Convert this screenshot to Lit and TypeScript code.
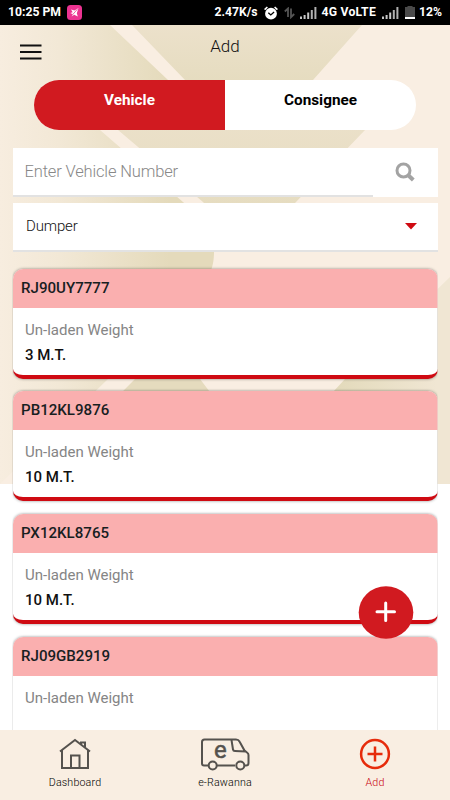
import { LitElement, html, css, svg, nothing } from "lit";
import { customElement } from "lit/decorators.js";

interface Vehicle {
  plate: string;
  weight?: string;
}

const vehicles: Vehicle[] = [
  { plate: "RJ90UY7777", weight: "3 M.T." },
  { plate: "PB12KL9876", weight: "10 M.T." },
  { plate: "PX12KL8765", weight: "10 M.T." },
  { plate: "RJ09GB2919" },
];

const signal = svg`<path d="M0 9.5h2V12H0zM3.6 8h2v4h-2zM7.2 5.500h2V12h-2z" fill="#c8c8c8"/><path d="M10.800 3h2v9h-2zM14.400 0h2v12h-2z" fill="#b0b0b0"/>`;

@customElement("status-bar")
class StatusBar extends LitElement {
  static styles = css`
    :host {
      display: flex;
      align-items: center;
      height: 25px;
      box-sizing: border-box;
      padding: 0 8px;
      background: #000;
      color: #fff;
      font: 700 12.200px/25px Roboto, "Liberation Sans", sans-serif;
      white-space: nowrap;
    }
    svg { display: block; flex: none; }
    .app { margin-left: 6px; }
    .speed { margin-left: auto; }
    .alarm { margin-left: 6.500px; }
    .data { margin-left: 6px; }
    .sig { margin-left: 5px; }
    .net { margin-left: 4.500px; letter-spacing: 0.25px; }
    .sig2 { margin-left: 6px; }
    .batt { margin-left: 6px; }
    .pct { margin-left: 4px; }
  `;
  render() {
    return html`
      <span>10:25 PM</span>
      <svg class="app" width="15" height="15" viewBox="0 0 15 15">
        <rect width="15" height="15" rx="3.500" fill="#ec3391" />
        <path d="M11.500 3 7.500 5.600 4 4.600l1.700 2.600L3.300 8l2.200 1-.9 2.400 2.600-1.700 3.600 1.700-1-3.200z" fill="#fff" />
        <path d="m4 11.500 7-8" stroke="#ec3391" stroke-width=".8" />
      </svg>
      <span class="speed">2.47K/s</span>
      <svg class="alarm" width="14" height="14" viewBox="0 0 14 14">
        <circle cx="7" cy="7.700" r="5.900" fill="#fff" />
        <path d="M.6 3.600 3.400 1M13.400 3.600 10.600 1" stroke="#fff" stroke-width="1.600" />
        <path d="m4.300 6.700 2.500 2.300 3.300-2.900" fill="none" stroke="#000" stroke-width="1.300" />
      </svg>
      <svg class="data" width="11" height="12" viewBox="0 0 11 12" fill="none" stroke="#555" stroke-width="1.800">
        <path d="M.8 4.500 4 1.500V10M7 1.500V10.200L10.200 7" />
      </svg>
      <svg class="sig" width="17" height="12" viewBox="0 0 17 12">${signal}</svg>
      <span class="net">4G VoLTE</span>
      <svg class="sig2" width="17" height="12" viewBox="0 0 17 12">${signal}</svg>
      <svg class="batt" width="10" height="13" viewBox="0 0 10 13">
        <path d="M2.500 0h5v1H10v10H0V1h2.500z" fill="#4a4a4a" />
        <path d="M0 11h10v2H0z" fill="#fff" />
      </svg>
      <span class="pct">12%</span>
    `;
  }
}

@customElement("vehicle-card")
class VehicleCard extends LitElement {
  static properties = { vehicle: { attribute: false } };
  declare vehicle: Vehicle;
  static styles = css`
    :host {
      display: block;
      flex: none;
      height: 110px;
      box-sizing: border-box;
      border-radius: 10px;
      border-bottom: 4px solid #cf0a12;
      background: #fff;
      overflow: hidden;
      box-shadow: 0 0 3px rgba(0, 0, 0, 0.45);
      font-family: Roboto, "Liberation Sans", sans-serif;
      clip-path: inset(-3px 0 -4px 0);
    }
    .plate {
      height: 39px;
      padding-left: 8.500px;
      background: #faafaf;
      color: #17201f;
      font-size: 15.100px;
      font-weight: 500;
      line-height: 39px;
    }
    .body {
      padding: 10px 12.500px;
      font-size: 15px;
      line-height: 25px;
      color: #858585;
    }
    .weight { color: #111; font-weight: 500; }
  `;
  render() {
    const { plate, weight } = this.vehicle;
    return html`
      <div class="plate">${plate}</div>
      <div class="body">
        <div>Un-laden Weight</div>
        ${weight ? html`<div class="weight">${weight}</div>` : nothing}
      </div>
    `;
  }
}

@customElement("app-root")
class AppRoot extends LitElement {
  static styles = css`
    :host {
      display: flex;
      flex-direction: column;
      position: relative;
      width: 450px;
      height: 800px;
      overflow: hidden;
      background: #fff;
      font-family: Roboto, "Liberation Sans", sans-serif;
      color: #111;
    }
    .backdrop { position: absolute; left: 0; top: 25px; }
    status-bar, header, main, footer { position: relative; flex: none; }
    header {
      display: grid;
      grid-template-columns: 60px 1fr 60px;
      height: 55px;
    }
    .menu { margin: 19px 0 0 20px; }
    .title {
      margin-top: 10px;
      text-align: center;
      font-size: 17px;
      line-height: 22px;
      font-weight: 300;
    }
    .tabs {
      display: flex;
      flex: none;
      height: 50px;
      margin: 0 34px;
      border-radius: 25px;
      overflow: hidden;
      background: #fff;
      font-size: 15.300px;
      line-height: 40px;
      font-weight: 700;
      text-align: center;
    }
    .tab { flex: 1; color: #000; }
    .tab.on { background: #d11a20; color: #fff; }
    main {
      display: flex;
      flex-direction: column;
      height: 650px;
      overflow: hidden;
    }
    .field {
      display: flex;
      flex: none;
      align-items: stretch;
      height: 49.500px;
      margin: 17.700px 12.500px 0;
      background: #fff;
      font-weight: 300;
    }
    .entry {
      width: 360px;
      box-sizing: border-box;
      padding-left: 12px;
      border-bottom: 2px solid #e2e2e2;
      font-size: 16.500px;
      letter-spacing: -0.15px;
      line-height: 48px;
      color: #888;
    }
    .search { margin: 14px 0 0 22px; }
    .select {
      justify-content: space-between;
      box-sizing: border-box;
      margin-top: 5.400px;
      padding: 0 20.500px 0 13.500px;
      border-bottom: 2px solid #e2e2e2;
      font-size: 15px;
      letter-spacing: -0.15px;
      line-height: 47px;
      color: #111;
    }
    .caret { margin-top: 20px; }
    .list {
      display: flex;
      flex-direction: column;
      gap: 12.900px;
      padding: 16.500px 12.500px 0;
    }
    .fab {
      position: absolute;
      left: 358px;
      top: 586px;
    }
    footer {
      display: grid;
      grid-template-columns: repeat(3, 1fr);
      height: 70px;
      background: #f9eee2;
      font-size: 10.700px;
      font-weight: 300;
      line-height: 14px;
      letter-spacing: 0.15px;
      color: #000;
    }
    .nav {
      display: flex;
      flex-direction: column;
      align-items: center;
      padding-top: 8px;
    }
    .nav svg { height: 32px; overflow: visible; }
    .nav span { margin-top: 6px; }
    .nav.on { color: #c8000a; }
    .e { font: 400 24px/24px Roboto, sans-serif; letter-spacing: 0; }
  `;
  render() {
    return html`
      <svg class="backdrop" width="450" height="459" viewBox="0 25 450 459">
        <defs>
          <linearGradient id="side" gradientUnits="userSpaceOnUse" x1="0" y1="0" x2="170" y2="0">
            <stop offset="0" stop-color="#f7eddf" />
            <stop offset=".35" stop-color="#f2e8d6" />
            <stop offset="1" stop-color="#e4dabb" />
          </linearGradient>
          <linearGradient id="head" x1="0" y1="0" x2="0" y2="1">
            <stop offset="0" stop-color="#ece1cb" />
            <stop offset="1" stop-color="#e3dabb" />
          </linearGradient>
          <linearGradient id="right" gradientUnits="userSpaceOnUse" x1="335" y1="0" x2="437" y2="0">
            <stop offset="0" stop-color="#e3dabb" />
            <stop offset="1" stop-color="#f0e6d3" />
          </linearGradient>
        </defs>
        <path d="M0 25h450v459H0z" fill="#f9eee2" />
        <path d="M0 25h110l58 55 20 25H0z" fill="url(#side)" />
        <path d="M132 25h230l-49 55-22 25h-81l-25-25z" fill="url(#head)" />
        <path d="M0 105h72l28 25 83 72c23 20 31 33 31 50 0 22-9 30-25 48L108 379 0 484z" fill="url(#side)" />
        <path d="M89 105h299l-23 25-69 72-48 48-45-48-85-72z" fill="url(#head)" />
        <path d="M165 345l35 34 80 105H31l104-105z" fill="#e5dbbe" />
        <path d="M450 277v207H240l93-92 12-13z" fill="url(#right)" />
      </svg>
      <status-bar></status-bar>
      <header>
        <svg class="menu" width="22" height="17" viewBox="0 0 22 17">
          <path d="M0 1.500h21.500M0 8h21.500M0 14.500h21.500" stroke="#111" stroke-width="2" />
        </svg>
        <div class="title">Add</div>
      </header>
      <main>
        <div class="tabs">
          <div class="tab on">Vehicle</div>
          <div class="tab">Consignee</div>
        </div>
        <div class="field">
          <div class="entry">Enter Vehicle Number</div>
          <svg class="search" width="20" height="20" viewBox="0 0 20 20" fill="none" stroke="#a3a3a3">
            <circle cx="8.500" cy="8.500" r="6.500" stroke-width="3" />
            <path d="m13 13 5.300 5" stroke-width="4" />
          </svg>
        </div>
        <div class="field select">
          <span>Dumper</span>
          <svg class="caret" width="12" height="7" viewBox="0 0 12 7"><path d="M0 0h12L6 6.500z" fill="#cf0a12" /></svg>
        </div>
        <div class="list">
          ${vehicles.map((v) => html`<vehicle-card .vehicle=${v}></vehicle-card>`)}
        </div>
      </main>
      <svg class="fab" width="56" height="54" viewBox="0 0 56 54">
        <ellipse cx="28" cy="26.500" rx="27.300" ry="26.200" fill="#d11a20" />
        <path d="M27.700 17v17.500M19 25.700h17.500" stroke="#fff" stroke-width="3" stroke-linecap="round" />
      </svg>
      <footer>
        <div class="nav">
          <svg width="32" height="32" viewBox="0 0 32 32" fill="none" stroke="#55524e" stroke-width="2">
            <path d="M1 13.500 16 2l15 11.500M3 12.500V30h26V12.500M12 30V17.500h8.500V30M22 6V4.500h4V9" />
          </svg>
          <span>Dashboard</span>
        </div>
        <div class="nav">
          <svg width="50" height="32" viewBox="0 0 50 32" fill="none" stroke="#55524e" stroke-width="2">
            <path d="M8 27.500H4q-2 0-2-2V4q0-2.500 2.500-2.500H36q2.500 0 3.500 2l5 9 2.500 2q1.500 1 1.500 2.500v8q0 2.500-2.500 2.500h-1M17 27.500h18M31.500 2 33 11.500q.2 1.500 2 1.500l11 .5" />
            <circle cx="12.700" cy="27.500" r="4" /><circle cx="40.300" cy="27.500" r="4" />
            <text class="e" x="14" y="19.500" fill="#55524e" stroke="#55524e" stroke-width=".5">e</text>
          </svg>
          <span>e-Rawanna</span>
        </div>
        <div class="nav on">
          <svg width="32" height="32" viewBox="0 0 32 32" fill="none" stroke="#e62c0c" stroke-width="2.500">
            <circle cx="16" cy="16" r="13.900" />
            <path d="M16 8.500v15M8.500 16h15" />
          </svg>
          <span>Add</span>
        </div>
      </footer>
    `;
  }
}
